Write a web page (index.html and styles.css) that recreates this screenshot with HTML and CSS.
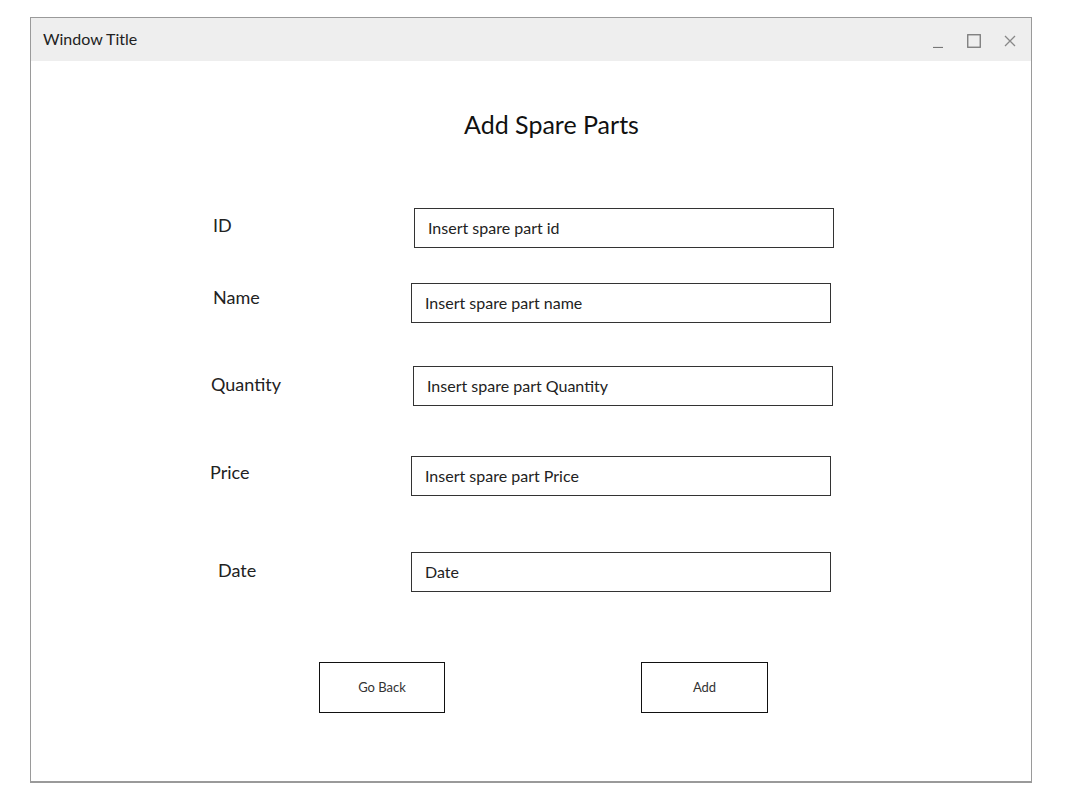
FILE: index.html
```html
<!DOCTYPE html>
<html>
<head>
<meta charset="utf-8">
<link rel="stylesheet" href="styles.css">
</head>
<body>
<div class="window">
  <div class="titlebar">
    <span class="title">Window Title</span>
    <div class="controls">
      <svg class="ctl" width="14" height="14" viewBox="0 0 14 14"><path d="M2 13.5H12" stroke="#777" stroke-width="1.2" fill="none"/></svg>
      <svg class="ctl" width="14" height="14" viewBox="0 0 14 14"><rect x="0.75" y="0.75" width="12.5" height="12.5" stroke="#777" stroke-width="1.3" fill="none"/></svg>
      <svg class="ctl" width="14" height="14" viewBox="0 0 14 14"><path d="M2 2L12 12M12 2L2 12" stroke="#888" stroke-width="1.3" fill="none"/></svg>
    </div>
  </div>
  <div class="content">
    <h1 class="heading">Add Spare Parts</h1>
    <div class="form">
      <div class="row row-id">
        <label class="label">ID</label>
        <div class="input">Insert spare part id</div>
      </div>
      <div class="row row-name">
        <label class="label">Name</label>
        <div class="input">Insert spare part name</div>
      </div>
      <div class="row row-qty">
        <label class="label">Quantity</label>
        <div class="input">Insert spare part Quantity</div>
      </div>
      <div class="row row-price">
        <label class="label">Price</label>
        <div class="input">Insert spare part Price</div>
      </div>
      <div class="row row-date">
        <label class="label">Date</label>
        <div class="input">Date</div>
      </div>
    </div>
    <div class="buttons">
      <div class="btn">Go Back</div>
      <div class="btn btn-add">Add</div>
    </div>
  </div>
</div>
</body>
</html>
```

FILE: styles.css
```css
* { box-sizing: border-box; }
html, body { margin: 0; padding: 0; background: #fff; }
body {
  font-family: "Lato", "Open Sans", sans-serif;
  color: #222;
}
.window {
  margin: 17px 0 0 30px;
  width: 1002px;
  height: 766px;
  border: 1px solid #9a9a9a;
  border-bottom-width: 2px;
  display: flex;
  flex-direction: column;
}
.titlebar {
  height: 43px;
  background: #eeeeee;
  display: flex;
  align-items: center;
  justify-content: space-between;
  padding: 0 14px 0 12px;
}
.title {
  font-size: 16px;
  color: #222;
  padding-bottom: 3px;
}
.controls {
  display: flex;
  gap: 22px;
  align-items: center;
  padding-top: 2px;
}
.content {
  flex: 1;
  display: flex;
  flex-direction: column;
}
.heading {
  margin: 47px 0 0 0;
  padding-left: 41px;
  text-align: center;
  font-weight: normal;
  font-size: 25px;
  line-height: 32px;
  color: #111;
}
.form {
  display: flex;
  flex-direction: column;
}
.row {
  display: flex;
  align-items: flex-start;
  padding-left: 181px;
}
.label {
  width: 200px;
  font-size: 18px;
  line-height: 24px;
  padding-top: 4px;
  color: #222;
}
.input {
  width: 420px;
  height: 40px;
  border: 1.5px solid #333;
  font-size: 16px;
  line-height: 37px;
  padding-left: 13px;
  color: #222;
}
.row-id { margin-top: 68px; padding-left: 182px; }
.row-id .input { margin-left: 1px; }
.row-id .label { padding-top: 5px; }
.row-name { margin-top: 35px; padding-left: 182px; }
.row-name .input { margin-left: -2px; }
.row-name .label { padding-top: 2px; }
.row-qty { margin-top: 43px; padding-left: 180px; }
.row-qty .input { margin-left: 2px; }
.row-qty .label { padding-top: 6px; }
.row-price { margin-top: 50px; padding-left: 179px; }
.row-price .input { margin-left: 1px; }
.row-date { margin-top: 56px; padding-left: 187px; }
.row-date .input { margin-left: -7px; }
.row-date .label { padding-top: 6px; }
.buttons {
  display: flex;
  margin-top: 70px;
  padding-left: 288px;
  gap: 196px;
}
.btn {
  width: 126px;
  height: 51px;
  border: 1px solid #111;
  display: flex;
  align-items: center;
  justify-content: center;
  font-size: 13px;
  color: #333;
  padding-bottom: 1px;
}
.btn-add { width: 127px; }
```
